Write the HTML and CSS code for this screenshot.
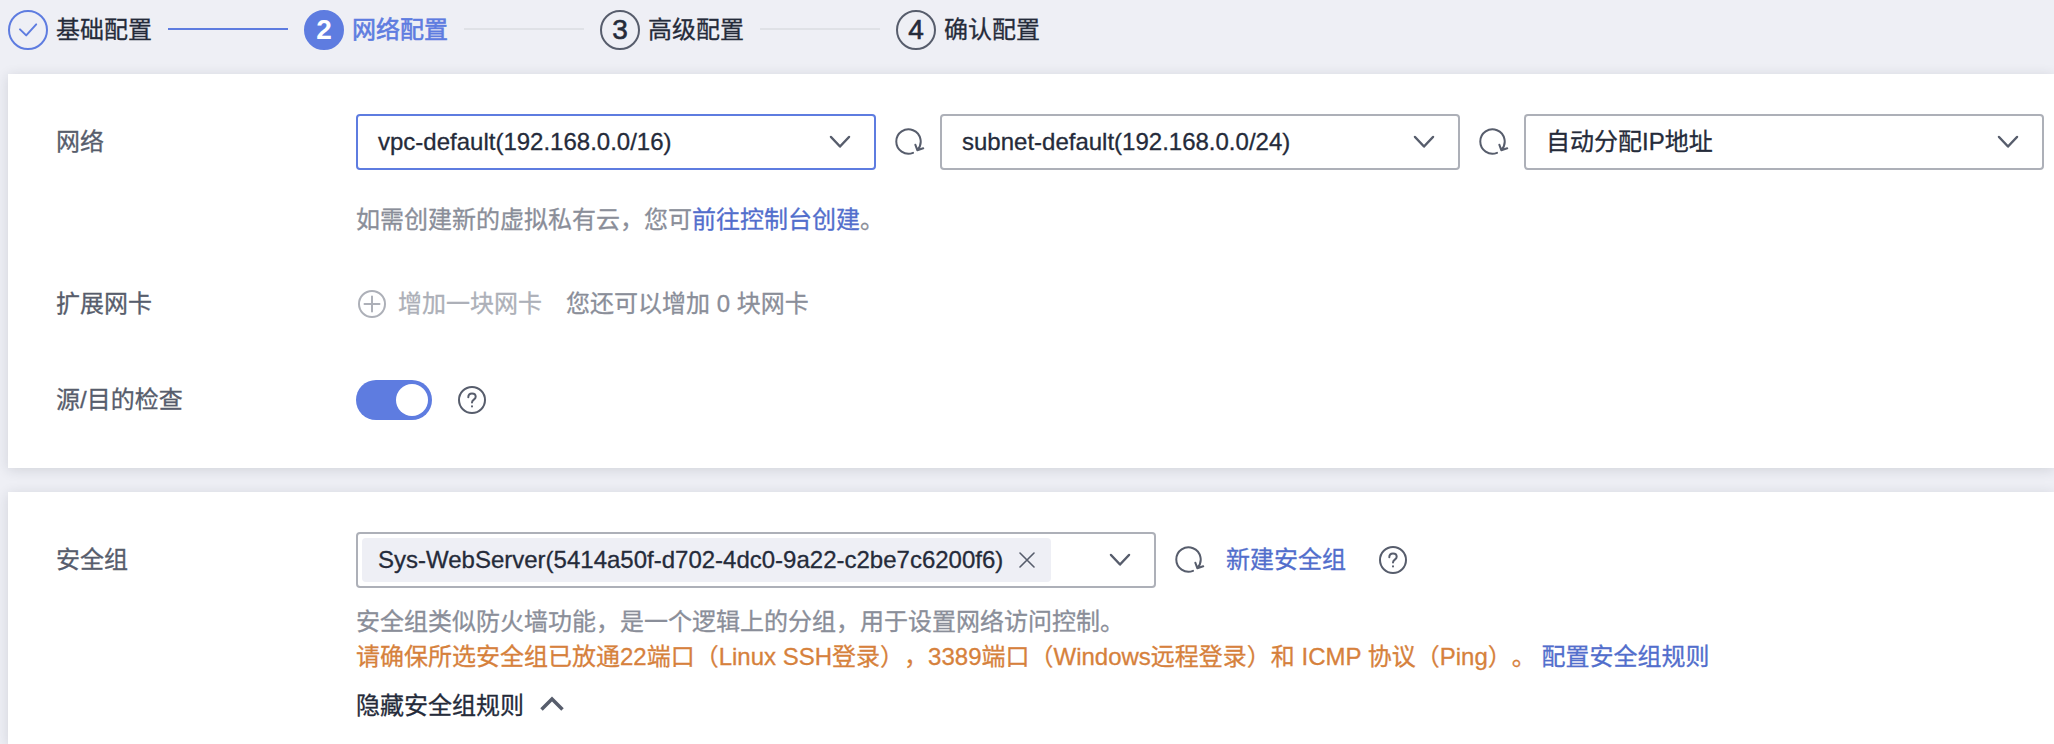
FILE: index.html
```html
<!DOCTYPE html>
<html lang="zh-CN">
<head>
<meta charset="utf-8">
<title>网络配置</title>
<link rel="stylesheet" href="styles.css">
</head>
<body>
<svg class="defs" width="0" height="0">
  <symbol id="chevron" viewBox="0 0 24 14"><path d="M3 2l9 9.5L21 2"/></symbol>
  <symbol id="refresh" viewBox="0 0 32 30"><path d="M20 25.9A12.2 12.2 0 1 1 24.3 23M22.4 17.8l1.9 5.4 5.9-1.9"/></symbol>
  <symbol id="help" viewBox="0 0 30 30"><circle cx="15" cy="15" r="13"/><path d="M11.3 12.2c0-2.4 1.5-3.8 3.7-3.8s3.7 1.4 3.7 3.4c0 2.9-3.7 2.8-3.7 5.6"/><path d="M15 21.2v.4"/></symbol>
</svg>

<ol class="steps">
  <li class="step done"><span class="dot"><svg width="20" height="16" viewBox="0 0 20 16"><path d="M2 7.4l6.2 6L18.2 2.4"/></svg></span><span>基础配置</span><i class="line"></i></li>
  <li class="step active"><span class="dot">2</span><span>网络配置</span><i class="line"></i></li>
  <li class="step"><span class="dot">3</span><span>高级配置</span><i class="line"></i></li>
  <li class="step"><span class="dot">4</span><span>确认配置</span></li>
</ol>

<section class="panel network">
  <div class="row">
    <div class="label tall">网络</div>
    <div>
      <div class="controls">
        <div class="select focused"><span>vpc-default(192.168.0.0/16)</span><svg class="chevron"><use href="#chevron"/></svg></div>
        <svg class="icon refresh"><use href="#refresh"/></svg>
        <div class="select"><span>subnet-default(192.168.0.0/24)</span><svg class="chevron"><use href="#chevron"/></svg></div>
        <svg class="icon refresh"><use href="#refresh"/></svg>
        <div class="select"><span>自动分配IP地址</span><svg class="chevron"><use href="#chevron"/></svg></div>
      </div>
      <p class="hint vpc-hint">如需创建新的虚拟私有云，您可<a class="link">前往控制台创建</a>。</p>
    </div>
  </div>
  <div class="row nic">
    <div class="label">扩展网卡</div>
    <div class="controls">
      <svg class="icon plus" viewBox="0 0 30 30"><circle cx="15" cy="15" r="13"/><path d="M15 7.5v15M7.5 15h15"/></svg>
      <span class="disabled">增加一块网卡</span>
      <span class="hint remain">您还可以增加 0 块网卡</span>
    </div>
  </div>
  <div class="row check">
    <div class="label">源/目的检查</div>
    <div class="controls">
      <span class="switch"><i class="knob"></i></span>
      <svg class="icon help"><use href="#help"/></svg>
    </div>
  </div>
</section>

<section class="panel security">
  <div class="row">
    <div class="label tall">安全组</div>
    <div>
      <div class="controls">
        <div class="select multi">
          <span class="tag">Sys-WebServer(5414a50f-d702-4dc0-9a22-c2be7c6200f6)<svg class="close" width="16" height="16" viewBox="0 0 16 16"><path d="M1 1l14 14M15 1L1 15"/></svg></span>
          <svg class="chevron"><use href="#chevron"/></svg>
        </div>
        <svg class="icon refresh"><use href="#refresh"/></svg>
        <a class="link new-group">新建安全组</a>
        <svg class="icon help group-help"><use href="#help"/></svg>
      </div>
      <p class="hint group-hint">安全组类似防火墙功能，是一个逻辑上的分组，用于设置网络访问控制。</p>
      <p class="warn">请确保所选安全组已放通22端口（Linux SSH登录）<span class="centered">，</span>3389端口（Windows远程登录）和 ICMP 协议（Ping）<span class="centered">。</span> <a class="link rules-link">配置安全组规则</a></p>
      <div class="collapse">隐藏安全组规则<svg class="chevron-up" width="26" height="16" viewBox="0 0 26 16"><path d="M2.5 13.5L13 3l10.5 10.5"/></svg></div>
    </div>
  </div>
</section>
</body>
</html>
```
FILE: styles.css
```css
* { box-sizing: border-box; }

body {
  margin: 0;
  height: 744px;
  overflow: hidden;
  background: #eeeff5;
  color: #252b3a;
  font: 24px/34px "Liberation Sans", "Noto Sans CJK SC", sans-serif;
  -webkit-text-stroke: 0.3px currentColor;
  text-spacing-trim: space-all;
  white-space: nowrap;
}

p { margin: 0; }
svg { fill: none; flex: none; stroke: #575d6c; stroke-width: 2; stroke-linecap: round; stroke-linejoin: round; }
.defs { display: none; }

.steps {
  display: flex;
  height: 74px;
  margin: 0;
  padding: 10px 0 0 8px;
  list-style: none;
}
.step { display: flex; align-items: center; width: 296px; height: 40px; }
.dot {
  display: flex;
  align-items: center;
  justify-content: center;
  width: 40px;
  height: 40px;
  margin-right: 8px;
  border: 2px solid #575d6c;
  border-radius: 50%;
  font-size: 28px;
  -webkit-text-stroke: 0.6px currentColor;
}
.line { width: 120px; height: 2px; margin: -2px 0 0 16px; background: #dfe1e6; }
.done .dot { border-color: #5e7ce0; }
.done .dot svg { stroke: #5e7ce0; }
.done .line { background: #5e7ce0; }
.active { color: #5e7ce0; -webkit-text-stroke: 0.6px currentColor; }
.active .dot { border-color: #5e7ce0; background: #5e7ce0; color: #fff; font-weight: bold; -webkit-text-stroke: 0; }

.panel {
  margin-left: 8px;
  padding: 40px 0 0 48px;
  background: #fff;
  box-shadow: 0 2px 12px rgba(37, 43, 58, 0.14);
}
.network { height: 394px; }
.security { height: 252px; margin-top: 24px; }

.row { display: grid; grid-template-columns: 300px 1fr; }
.label { color: #575d6c; line-height: 40px; }
.tall { line-height: 56px; }
.controls { display: flex; align-items: center; }
.nic { margin-top: 47px; }
.check { margin-top: 56px; }

.select {
  display: flex;
  align-items: center;
  justify-content: space-between;
  width: 520px;
  height: 56px;
  padding: 0 22px 0 20px;
  border: 2px solid #adb0b8;
  border-radius: 4px;
}
.focused { border-color: #5e7ce0; }
.multi { width: 800px; padding-left: 4px; }
.chevron { width: 24px; height: 14px; stroke-width: 2.5; }
.tag {
  display: flex;
  align-items: center;
  width: 689px;
  height: 44px;
  padding: 0 16px;
  border-radius: 4px;
  background: #eeeff5;
}
.close { margin-left: auto; stroke-width: 1.6; }

.icon { width: 30px; height: 30px; }
.icon.refresh { width: 32px; margin: 0 15px 0 17px; }
.plus { margin: 0 11px 0 1px; stroke: #adb0b8; }
.help { margin-left: 25px; }
.group-help { margin-left: 32px; }

.hint { color: #8a8e99; }
.vpc-hint { margin-top: 33px; }
.group-hint { margin-top: 17px; }
.disabled { color: #adb0b8; }
.remain { margin-left: 24px; }
.link { color: #526ecc; }
.new-group { margin-left: 6px; }
.warn { margin-top: -1px; color: #d6813c; }
.rules-link { margin-left: -1px; }
.centered { font-family: "Noto Sans CJK TC", sans-serif; }

.switch {
  display: flex;
  justify-content: flex-end;
  width: 76px;
  height: 40px;
  padding: 4px;
  border-radius: 20px;
  background: #5e7ce0;
}
.knob { width: 32px; height: 32px; border-radius: 50%; background: #fff; }

.collapse { display: flex; align-items: center; margin-top: 15px; }
.chevron-up { margin: -4px 0 0 15px; stroke-width: 3.5; stroke-linecap: butt; stroke-linejoin: miter; }
```
